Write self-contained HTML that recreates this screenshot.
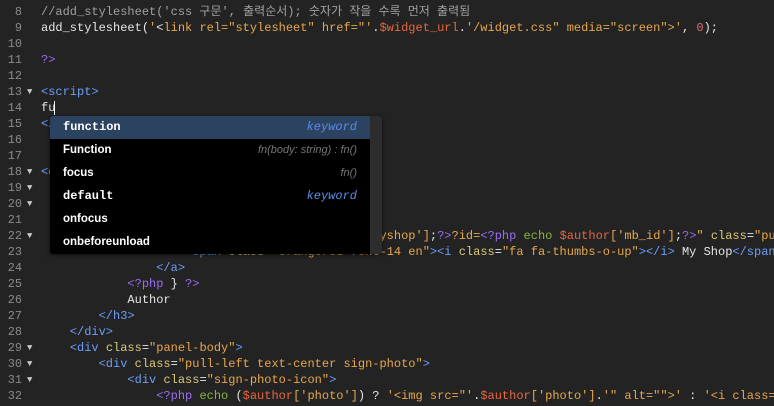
<!DOCTYPE html>
<html><head><meta charset="utf-8"><style>
body{margin:0;width:774px;height:406px;background:#232323;overflow:hidden;position:relative;font-family:"Liberation Mono","Noto Sans CJK KR",monospace;font-size:12px;}
.ln{position:absolute;left:0;width:22px;text-align:right;color:#8b8b8b;height:16px;line-height:16px;font-size:11.85px}
.fd{position:absolute;left:27px;color:#c8c8c8;font-size:9px;line-height:16px;}
.cd{position:absolute;left:41px;width:733px;overflow:hidden;white-space:pre;color:#e6e6e6;height:16px;line-height:16px;}
.t{color:#6c9ef8}.a{color:#d9c87a}.s{color:#e7a84a}.p{color:#9a6cf0}.k{color:#8bb33c}.v{color:#e8663f}.c{color:#a0a0a0}.n{color:#e06c6c}.w{color:#e6e6e6}
#pop{position:absolute;left:50px;top:116px;width:332px;height:138px;background:#000;border-radius:3px;box-shadow:0 1px 4px rgba(0,0,0,.6);font-family:"Liberation Sans",sans-serif;overflow:hidden}
#pop .sb{position:absolute;right:0;top:0;width:12px;height:138px;background:#2d2d2d}
.r{position:absolute;left:0;width:320px;height:23px;line-height:23px;}
.r .l{position:absolute;left:13px;color:#fff;font-weight:bold;font-size:11.5px}
.r .m{position:absolute;left:13px;color:#fff;font-family:"Liberation Mono",monospace;font-weight:bold;font-size:12px}
.r .rt{position:absolute;right:13px;font-style:italic;font-size:11px;color:#777}
.r .kw{position:absolute;right:13px;font-style:italic;font-size:12px;color:#5b8de8;font-family:"Liberation Mono",monospace}
</style></head><body>
<div class="ln" style="top:4px">8</div><div class="cd c" style="top:4px">//add_stylesheet('css 구문', 출력순서); 숫자가 작을 수록 먼저 출력됨</div>
<div class="ln" style="top:20px">9</div><div class="cd" style="top:20px"><span class="w">add_stylesheet(</span><span class="s">'<span class="w">&lt;</span>link rel="stylesheet" href="'</span><span class="w">.</span><span class="v">$widget_url</span><span class="w">.</span><span class="s">'/widget.css" media="screen"&gt;'</span><span class="w">, </span><span class="n">0</span><span class="w">);</span></div>
<div class="ln" style="top:36px">10</div>
<div class="ln" style="top:52px">11</div><div class="cd p" style="top:52px">?&gt;</div>
<div class="ln" style="top:68px">12</div>
<div class="ln" style="top:84px">13</div><div class="fd" style="top:84px">▼</div><div class="cd t" style="top:84px">&lt;script&gt;</div>
<div class="ln" style="top:100px">14</div><div class="cd" style="top:100px">fu<span style="border-left:1px solid #fff;margin-left:-1px"> </span></div>
<div class="ln" style="top:116px">15</div><div class="cd t" style="top:116px">&lt;/script&gt;</div>
<div class="ln" style="top:132px">16</div>
<div class="ln" style="top:148px">17</div>
<div class="ln" style="top:164px">18</div><div class="fd" style="top:164px">▼</div><div class="cd t" style="top:164px">&lt;div class="panel"&gt;</div>
<div class="ln" style="top:180px">19</div><div class="fd" style="top:180px">▼</div>
<div class="ln" style="top:196px">20</div><div class="fd" style="top:196px">▼</div>
<div class="ln" style="top:212px">21</div>
<div class="ln" style="top:228px">22</div><div class="fd" style="top:228px">▼</div><div class="cd" style="top:228px">            <span class="t">&lt;a</span> <span class="a">href</span>=<span class="s">"&lt;?php echo G5_SHOP_URL.'/m</span><span class="s">yshop']</span><span class="w">;</span><span class="p">?&gt;</span><span class="s">?id=</span><span class="p">&lt;?php</span> <span class="k">echo</span> <span class="v">$author</span><span class="s">[</span><span class="s">'mb_id'</span><span class="s">]</span><span class="w">;</span><span class="p">?&gt;</span><span class="s">"</span> <span class="a">class</span>=<span class="s">"pull-right"</span></div>
<div class="ln" style="top:244px">23</div><div class="cd" style="top:244px">                    <span class="t">&lt;span</span> <span class="a">class</span>=<span class="s">"orangered font-14 en"</span><span class="t">&gt;&lt;i</span> <span class="a">class</span>=<span class="s">"fa fa-thumbs-o-up"</span><span class="t">&gt;&lt;/i&gt;</span> My Shop<span class="t">&lt;/span&gt;</span></div>
<div class="ln" style="top:260px">24</div><div class="cd t" style="top:260px">                &lt;/a&gt;</div>
<div class="ln" style="top:276px">25</div><div class="cd" style="top:276px">            <span class="p">&lt;?php</span> } <span class="p">?&gt;</span></div>
<div class="ln" style="top:292px">26</div><div class="cd" style="top:292px">            Author</div>
<div class="ln" style="top:308px">27</div><div class="cd t" style="top:308px">        &lt;/h3&gt;</div>
<div class="ln" style="top:324px">28</div><div class="cd t" style="top:324px">    &lt;/div&gt;</div>
<div class="ln" style="top:340px">29</div><div class="fd" style="top:340px">▼</div><div class="cd" style="top:340px">    <span class="t">&lt;div</span> <span class="a">class</span>=<span class="s">"panel-body"</span><span class="t">&gt;</span></div>
<div class="ln" style="top:356px">30</div><div class="fd" style="top:356px">▼</div><div class="cd" style="top:356px">        <span class="t">&lt;div</span> <span class="a">class</span>=<span class="s">"pull-left text-center sign-photo"</span><span class="t">&gt;</span></div>
<div class="ln" style="top:372px">31</div><div class="fd" style="top:372px">▼</div><div class="cd" style="top:372px">            <span class="t">&lt;div</span> <span class="a">class</span>=<span class="s">"sign-photo-icon"</span><span class="t">&gt;</span></div>
<div class="ln" style="top:388px">32</div><div class="cd" style="top:388px">                <span class="p">&lt;?php</span> <span class="k">echo</span> (<span class="v">$author</span><span class="s">['photo']</span>) ? <span class="s">'&lt;img src="'</span>.<span class="v">$author</span><span class="s">['photo']</span>.<span class="s">'" alt=""&gt;'</span> : <span class="s">'&lt;i class="fa"'</span></div>
<div id="pop">
<div class="r" style="top:0;background:#2b4261"><span class="m">function</span><span class="kw">keyword</span></div>
<div class="r" style="top:23px"><span class="l">Function</span><span class="rt">fn(body: string) : fn()</span></div>
<div class="r" style="top:46px"><span class="l">focus</span><span class="rt">fn()</span></div>
<div class="r" style="top:69px"><span class="m">default</span><span class="kw">keyword</span></div>
<div class="r" style="top:92px"><span class="l">onfocus</span></div>
<div class="r" style="top:115px"><span class="l">onbeforeunload</span></div>
<div class="sb"></div>
</div>
</body></html>
